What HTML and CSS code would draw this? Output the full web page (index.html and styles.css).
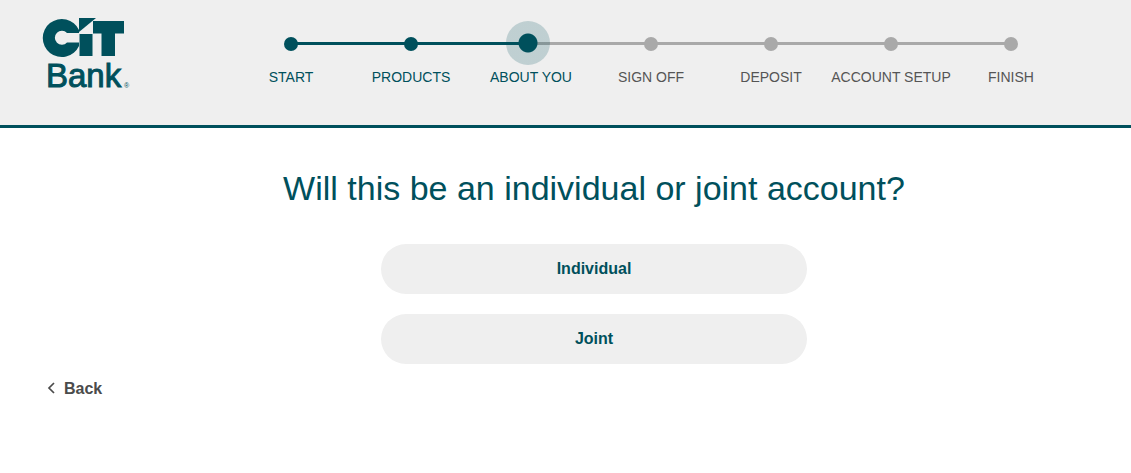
FILE: index.html
```html
<!DOCTYPE html>
<html lang="en">
<head>
  <meta charset="UTF-8">
  <meta name="viewport" content="width=device-width, initial-scale=1">
  <title>CIT Bank - About You</title>
  <link rel="stylesheet" href="styles.css">
</head>
<body>
  <header class="header">
    <a class="logo" href="#" aria-label="CIT Bank">
      <svg width="90" height="76" viewBox="42 17 90 76">
        <path fill="#00505c" d="M79 33 L67 33 A7 7 0 1 0 67 42.500 L79 42.500 V46 A19 19 0 1 1 79 30 Z"/>
        <path fill="#00505c" d="M79 18 H96 L79 32 Z"/>
        <rect fill="#00505c" x="79.500" y="34" width="13" height="22"/>
        <path fill="#00505c" d="M93 21 H124 V33.500 H115 V56 H101.500 V33.500 H93 Z"/>
        <text class="logo-name" x="46" y="87">Bank</text>
        <text class="logo-mark" x="124" y="88">®</text>
      </svg>
    </a>
    <ol class="steps">
      <li class="step done">START</li>
      <li class="step done">PRODUCTS</li>
      <li class="step current" aria-current="step">ABOUT YOU</li>
      <li class="step">SIGN OFF</li>
      <li class="step">DEPOSIT</li>
      <li class="step">ACCOUNT SETUP</li>
      <li class="step">FINISH</li>
    </ol>
  </header>

  <main>
    <div class="question">
      <h1>Will this be an individual or joint account?</h1>
      <div class="choices">
        <button type="button">Individual</button>
        <button type="button">Joint</button>
      </div>
    </div>
    <a class="back" href="#">
      <svg width="10" height="14" viewBox="0 0 10 14">
        <path d="M7 1 L2 6 L7 11" fill="none" stroke="#4b4b4b" stroke-width="1.7"/>
      </svg>
      Back
    </a>
  </main>
</body>
</html>
```

FILE: styles.css
```css
* {
  box-sizing: border-box;
}
body {
  margin: 0;
  background: #fff;
  color: #00505c;
  font-family: "Liberation Sans", Arial, sans-serif;
}
.header {
  display: flex;
  justify-content: space-between;
  align-items: flex-start;
  padding: 17px 60px 32px 42px;
  background: #efefef;
  border-bottom: 3px solid #00505c;
}
.logo svg {
  display: block;
  overflow: visible;
}
.logo-name {
  font-size: 33px;
  fill: #00505c;
  stroke: #00505c;
}
.logo-mark {
  font-size: 7px;
  fill: #00505c;
}

/* progress steps */
.steps {
  display: flex;
  flex: 0 1 840px;
  margin: 0;
  padding: 0;
  list-style: none;
}
.step {
  position: relative;
  flex: 1;
  padding-top: 52px;
  color: #555;
  font-size: 14px;
  line-height: 16px;
  text-align: center;
  white-space: nowrap;
}
.step.done,
.step.current {
  color: #00505c;
}
/* line to the next step */
.step::before {
  content: "";
  position: absolute;
  top: 25px;
  left: 50%;
  width: 100%;
  height: 3px;
  background: #a9a9a9;
}
.step.done::before {
  background: #00505c;
}
.step:last-child::before {
  display: none;
}
.step::after {
  content: "";
  position: absolute;
  top: 20px;
  left: 50%;
  width: 14px;
  height: 14px;
  margin-left: -7px;
  border-radius: 50%;
  background: #a9a9a9;
}
.step.done::after {
  background: #00505c;
}
.step.current::after {
  z-index: 1;
  top: 4px;
  width: 44px;
  height: 44px;
  margin-left: -25px;
  background: radial-gradient(circle, #00505c 9px, rgba(0, 80, 92, 0.2) 10px);
}

/* question */
.question {
  padding: 40px 0 16px 57px;
  text-align: center;
}
h1 {
  margin: 0 0 36px;
  font-size: 34px;
  font-weight: normal;
  line-height: 40px;
}
.choices {
  display: flex;
  flex-direction: column;
  gap: 20px;
  max-width: 426px;
  margin: 0 auto;
}
.choices button {
  height: 50px;
  border: none;
  border-radius: 25px;
  background: #efefef;
  color: #00505c;
  font-family: inherit;
  font-size: 16px;
  font-weight: bold;
  cursor: pointer;
}
.back {
  display: inline-flex;
  align-items: center;
  gap: 7px;
  margin-left: 47px;
  color: #4b4b4b;
  font-size: 16px;
  font-weight: bold;
  line-height: 18px;
  text-decoration: none;
}
```
